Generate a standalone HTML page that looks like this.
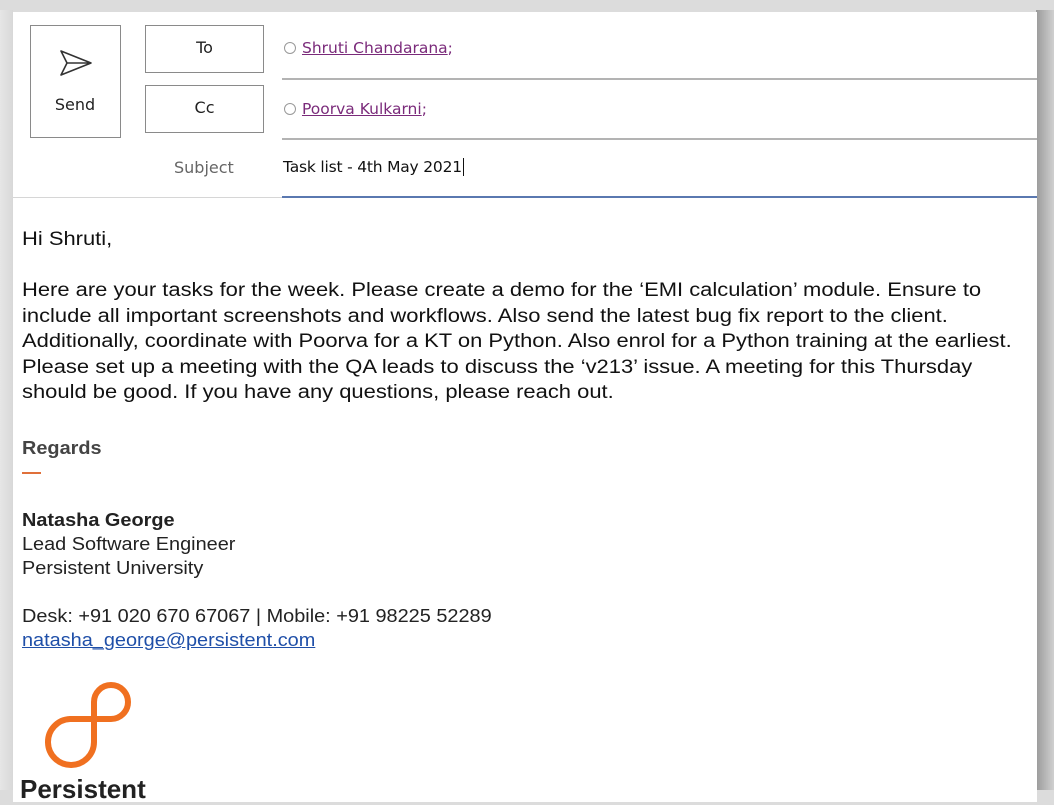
<!DOCTYPE html>
<html><head><meta charset="utf-8"><style>
html,body{margin:0;padding:0}
body{width:1054px;height:790px;overflow:hidden;position:relative;background:linear-gradient(#dcdcdc,#e8e8e8);font-family:"Liberation Sans",Arial,sans-serif}
.shadow{position:absolute;left:1036px;top:10px;width:18px;height:780px;background:linear-gradient(90deg,#9a9a9a,#b5b5b5 50%,#d0d0d0)}
.leftsh{position:absolute;left:0;top:10px;width:13px;height:780px;background:linear-gradient(90deg,#e6e6e6,#d8d8d8)}
.win{position:absolute;left:13px;top:12px;width:1024px;height:790px;background:#fff}
.a{position:absolute}
.box{position:absolute;border:1.5px solid #8a8a8a;background:#fff;box-sizing:border-box;font-family:"DejaVu Sans","Liberation Sans",sans-serif;font-size:16px;color:#222;text-align:center}
.hl{position:absolute;height:2px;background:#b3b3b3}
.rec{font-family:"DejaVu Sans","Liberation Sans",sans-serif;font-size:15.5px;color:#7a2a7a;text-decoration:underline}
.circ{display:inline-block;width:10px;height:10px;border:1px solid #999;border-radius:50%;margin-right:6px;vertical-align:-1px}
.body{position:absolute;left:22px;font-size:19.6px;line-height:25.5px;color:#111;white-space:nowrap;transform:scaleX(1.12);transform-origin:0 0}
.sig{position:absolute;left:22px;font-size:18px;line-height:24px;color:#222;white-space:nowrap;transform:scaleX(1.105);transform-origin:0 0}
</style></head><body>
<div class="leftsh"></div>
<div class="shadow"></div>
<div class="win"></div>
<div class="box" style="left:30px;top:25px;width:91px;height:113px">
<svg class="a" style="left:27px;top:22px" width="36" height="30" viewBox="0 0 36 30"><path d="M3 3 L33 15 L3 27 L9 15 Z M9 15 L33 15" fill="none" stroke="#333" stroke-width="1.6" stroke-linejoin="round"/></svg>
<div class="a" style="left:0;width:88px;top:69px">Send</div></div>
<div class="box" style="left:145px;top:25px;width:119px;height:48px;line-height:44px">To</div>
<div class="box" style="left:145px;top:85px;width:119px;height:48px;line-height:44px">Cc</div>
<div class="a" style="left:284px;top:39px"><span class="circ"></span><span class="rec">Shruti Chandarana</span><span class="rec" style="text-decoration:none">;</span></div>
<div class="a" style="left:284px;top:100px"><span class="circ"></span><span class="rec">Poorva Kulkarni</span><span class="rec" style="text-decoration:none">;</span></div>
<div class="hl" style="left:282px;top:78px;width:755px"></div>
<div class="hl" style="left:282px;top:138px;width:755px"></div>
<div class="a" style="left:174px;top:158px;font-family:'DejaVu Sans','Liberation Sans',sans-serif;font-size:16px;color:#666">Subject</div>
<div class="a" style="left:283px;top:158px;font-family:'DejaVu Sans','Liberation Sans',sans-serif;font-size:15.5px;color:#111;letter-spacing:-0.2px">Task list - 4th May 2021<span style="border-left:1.5px solid #111;margin-left:1px"></span></div>
<div class="a" style="left:13px;top:197px;width:270px;height:1px;background:#d6d6d6"></div>
<div class="a" style="left:282px;top:196px;width:755px;height:2px;background:#5a78b0"></div>
<div class="body" style="top:227px">Hi Shruti,</div>
<div class="body" style="top:278px">Here are your tasks for the week. Please create a demo for the ‘EMI calculation’ module. Ensure to<br>include all important screenshots and workflows. Also send the latest bug fix report to the client.<br>Additionally, coordinate with Poorva for a KT on Python. Also enrol for a Python training at the earliest.<br>Please set up a meeting with the QA leads to discuss the ‘v213’ issue. A meeting for this Thursday<br>should be good. If you have any questions, please reach out.</div>
<div class="sig" style="top:436px;font-weight:bold;color:#444">Regards</div>
<div class="a" style="left:22px;top:472px;width:19px;height:2px;background:#e0703a"></div>
<div class="sig" style="top:508px"><b>Natasha George</b><br>Lead Software Engineer<br>Persistent University</div>
<div class="sig" style="top:604px">Desk: +91 020 670 67067 | Mobile: +91 98225 52289<br><span style="color:#1f4fa8;text-decoration:underline">natasha_george@persistent.com</span></div>
<svg class="a" style="left:0;top:640px" width="200" height="150" viewBox="0 640 200 150"><path d="M94 742 L94 702 A17 17 0 1 1 111 719 L70 719 A23 23 0 1 0 94 742" fill="none" stroke="#f07020" stroke-width="6"/></svg>
<div class="a" style="left:20px;top:774px;font-size:26px;font-weight:bold;color:#222">Persistent</div>
</body></html>
